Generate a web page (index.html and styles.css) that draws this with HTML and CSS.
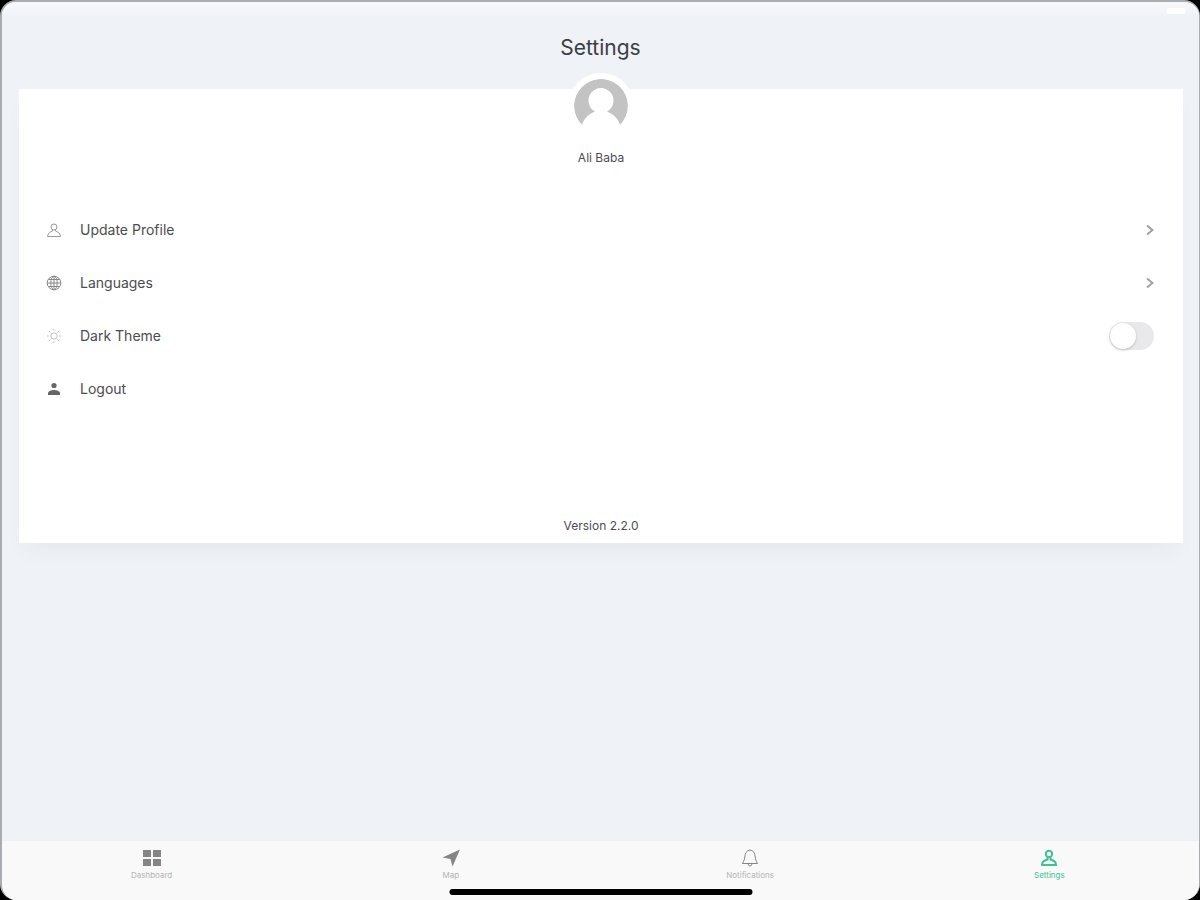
FILE: index.html
```html
<!DOCTYPE html>
<html lang="en">
<head>
    <meta charset="UTF-8">
    <meta name="viewport" content="width=device-width, initial-scale=1.0">
    <title>Settings</title>
    <link rel="stylesheet" href="styles.css">
</head>
<body>
    <div class="screen">
        <div class="status-bar"><span class="battery"></span></div>
        <header class="header">
            <h1>Settings</h1>
        </header>

        <main class="card">
            <div class="profile">
                <svg class="avatar" viewBox="0 0 54 54" aria-hidden="true">
                    <path fill="#c3c3c3" d="M8 46A27 27 0 1 1 46 46C44 39 39 35 33 32.500A12.500 12.500 0 1 0 21 32.500C15 35 10 39 8 46Z"/>
                </svg>
                <p class="name">Ali Baba</p>
            </div>

            <ul class="menu">
                <li>
                    <a class="row" href="#profile">
                        <svg class="icon light" viewBox="0 0 16 16" aria-hidden="true">
                            <circle cx="8" cy="5" r="3"/>
                            <path d="M6.500 7.500V9L3.500 10.500Q2 11.500 1.500 14.500H14.500Q14 11.500 12.500 10.500L9.500 9V7.500"/>
                        </svg>
                        <span class="label">Update Profile</span>
                        <svg class="chevron" viewBox="0 0 8 12" aria-hidden="true"><path d="M1 1.500L6.500 6L1 10.500"/></svg>
                    </a>
                </li>
                <li>
                    <a class="row" href="#languages">
                        <svg class="icon globe" viewBox="0 0 16 16" aria-hidden="true">
                            <circle cx="8" cy="8" r="6.800"/>
                            <ellipse cx="8" cy="8" rx="3.200" ry="6.800"/>
                            <path d="M1.200 8H14.800M2.500 4.500H13.500M2.500 11.500H13.500M8 1V15"/>
                        </svg>
                        <span class="label">Languages</span>
                        <svg class="chevron" viewBox="0 0 8 12" aria-hidden="true"><path d="M1 1.500L6.500 6L1 10.500"/></svg>
                    </a>
                </li>
                <li>
                    <label class="row">
                        <svg class="icon sun" viewBox="0 0 16 16" aria-hidden="true">
                            <circle cx="8" cy="8" r="3.200"/>
                            <path d="M8 1V3M8 13V15M1 8H3M13 8H15M3 3L4.400 4.400M11.600 11.600L13 13M3 13L4.400 11.600M11.600 4.400L13 3"/>
                        </svg>
                        <span class="label">Dark Theme</span>
                        <input class="switch" type="checkbox" role="switch">
                    </label>
                </li>
                <li>
                    <button class="row" type="button">
                        <svg class="icon solid" viewBox="0 0 16 16" aria-hidden="true">
                            <circle cx="8" cy="4.500" r="2.600"/>
                            <path d="M2 14V11.500Q3.500 9 8 9Q12.500 9 14 11.500V14Z"/>
                        </svg>
                        <span class="label">Logout</span>
                    </button>
                </li>
            </ul>

            <p class="version">Version 2.2.0</p>
        </main>

        <nav class="tabs">
            <a class="tab" href="#dashboard">
                <svg class="tab-icon" viewBox="0 0 20 20" aria-hidden="true">
                    <path fill="currentColor" d="M1 2h8v7H1zM11 2h8v7h-8zM1 11h8v7H1zM11 11h8v7h-8z"/>
                </svg>
                <span>Dashboard</span>
            </a>
            <a class="tab" href="#map">
                <svg class="tab-icon" viewBox="0 0 20 20" aria-hidden="true">
                    <path fill="currentColor" d="M19 1.500L11.500 18.500L9.500 11L1.500 9.500Z"/>
                </svg>
                <span>Map</span>
            </a>
            <a class="tab" href="#notifications">
                <svg class="tab-icon line" viewBox="0 0 20 20" aria-hidden="true">
                    <path d="M10 2C6.500 2.500 5 5.500 4.800 9C4.600 12 3.500 13 2.500 15.500H17.500C16.500 13 15.400 12 15.200 9C15 5.500 13.500 2.500 10 2ZM8 16Q8.500 18 10 18Q11.500 18 12 16"/>
                </svg>
                <span>Notifications</span>
            </a>
            <a class="tab active" href="#settings" aria-current="page">
                <svg class="tab-icon line" viewBox="0 0 20 20" aria-hidden="true">
                    <circle cx="10" cy="6" r="3.200"/>
                    <path d="M8.500 9.500V11.500L5 13Q3 14 3 17H17Q17 14 15 13L11.500 11.500V9.500"/>
                </svg>
                <span>Settings</span>
            </a>
            <span class="home-indicator"></span>
        </nav>
    </div>
</body>
</html>
```

FILE: styles.css
```css
* {
    box-sizing: border-box;
}
body {
    margin: 0;
    background: #000;
    color: #4c4c4e;
    font-family: Inter, "Liberation Sans", sans-serif;
    font-size: 13px;
}
h1, p, ul {
    margin: 0;
    padding: 0;
}
.screen {
    display: flex;
    flex-direction: column;
    min-height: 100vh;
    background: #eff3f8;
    border: solid #a9acb0;
    border-width: 2px 1px 0 2px;
    border-radius: 16px;
    overflow: hidden;
}
.status-bar {
    display: flex;
    justify-content: flex-end;
    height: 14px;
    padding: 6px 14px 0;
    background: linear-gradient(#f7f8fa, #eff3f8);
}
.battery {
    width: 18px;
    height: 6px;
    border-radius: 2px;
    background: #fff;
}
.header {
    padding: 18px 0 27px;
    text-align: center;
}
.header h1 {
    color: #3c3e42;
    font-size: 21px;
    font-weight: 400;
    line-height: 28px;
}

/* Profile card */
.card {
    margin: 0 16px 0 17px;
    padding-bottom: 8px;
    background: #fff;
    box-shadow: 0 12px 20px -4px rgba(0, 0, 0, 0.04);
}
.profile {
    display: flex;
    flex-direction: column;
    align-items: center;
    height: 114px;
}
.avatar {
    width: 66px;
    height: 66px;
    margin-top: -16px;
    padding: 6px;
    border-radius: 50%;
    background: #fff;
}
.name {
    margin-top: 11px;
    font-size: 12px;
    line-height: 16px;
}
.menu {
    list-style: none;
}
.row {
    display: flex;
    align-items: center;
    width: 100%;
    height: 53px;
    padding: 0 29px 0 27px;
    border: 0;
    background: none;
    color: inherit;
    font: inherit;
    font-size: 14px;
    text-align: left;
    text-decoration: none;
    cursor: pointer;
}
.label {
    flex: 1;
    margin-left: 18px;
}
.icon {
    width: 16px;
    height: 16px;
    fill: none;
    stroke: #777;
}
.light {
    stroke: #999;
}
.globe {
    stroke: #888;
}
.sun {
    stroke: #c4c4c4;
}
.solid {
    fill: #666;
    stroke: none;
}
.chevron {
    width: 8px;
    height: 12px;
    fill: none;
    stroke: #a0a0a0;
    stroke-width: 2;
}
.switch {
    appearance: none;
    width: 45px;
    height: 28px;
    margin: 0;
    border-radius: 14px;
    background: #e9e9eb;
    cursor: pointer;
}
.switch::before {
    content: "";
    display: block;
    width: 26px;
    height: 26px;
    margin: 1px;
    border-radius: 50%;
    background: #fff;
    box-shadow: 0 1px 3px rgba(0, 0, 0, 0.2);
}
.switch:checked {
    background: #2dbd8f;
}
.switch:checked::before {
    margin-left: 18px;
}
.version {
    margin-top: 102px;
    font-size: 12px;
    line-height: 18px;
    text-align: center;
}

/* Bottom tabs */
.tabs {
    position: relative;
    display: grid;
    grid-template-columns: repeat(4, 1fr);
    height: 60px;
    margin-top: auto;
    border-top: 1px solid #efefef;
    background: #f9f9f9;
}
.tab {
    display: flex;
    flex-direction: column;
    align-items: center;
    padding-top: 7px;
    color: #b4b4b4;
    font-size: 8px;
    line-height: 12px;
    text-decoration: none;
}
.tab-icon {
    width: 20px;
    height: 20px;
    margin-bottom: 1px;
    color: #858585;
}
.line {
    fill: none;
    stroke: currentColor;
}
.active,
.active .tab-icon {
    color: #3fc198;
}
.active .tab-icon {
    stroke-width: 2;
}
.home-indicator {
    position: absolute;
    bottom: 5px;
    left: 50%;
    width: 303px;
    height: 6px;
    border-radius: 3px;
    background: #000;
    transform: translateX(-50%);
}
```
